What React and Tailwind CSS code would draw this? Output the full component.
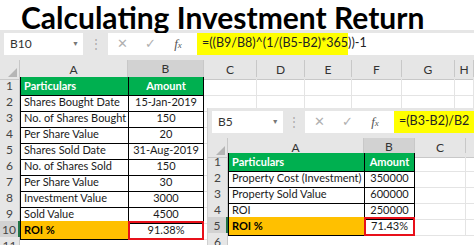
import React from "react";

const F = { fontFamily: "Lato, 'Open Sans', sans-serif" };

function FormulaBar({ name, formula, nameW, inputW, yellowW }) {
  return (
    <div className="flex items-center h-[27px] bg-[#e6e6e6]" style={F}>
      <div className="ml-[4px] h-[22px] bg-white flex items-center justify-between pl-[6px] pr-[4px] text-[12px] text-[#333]" style={{ width: nameW }}>
        <span>{name}</span>
        <span className="text-[7px] text-[#777]">▼</span>
      </div>
      <div className="w-[25px] flex justify-center text-[#aaa] text-[12px]">⋮</div>
      <div className="h-[22px] bg-white flex items-center flex-1">
        <div className="flex items-center h-full" style={{ width: inputW }}>
          <span className="w-[28px] text-center text-[#b0b0b0] text-[13px] leading-none">✕</span>
          <span className="w-[28px] text-center text-[#b0b0b0] text-[13px] leading-none">✓</span>
          <span className="w-[28px] text-center text-[#555] text-[13px] italic leading-none" style={{ fontFamily: "'Liberation Serif', serif" }}>f<span className="text-[9px]">x</span></span>
        </div>
        <div className="h-full bg-[#ffff00] flex items-center pl-[5px] text-[12.5px] text-[#222] whitespace-nowrap" style={{ width: yellowW }}>
          {formula}
        </div>
      </div>
    </div>
  );
}

function Corner() {
  return (
    <div className="relative h-full bg-[#e6e6e6] border-r border-b border-[#c8c8c8]">
      <div className="absolute right-[2px] bottom-[2px] w-0 h-0 border-l-[9px] border-l-transparent border-b-[9px] border-b-[#b5b5b5]" />
    </div>
  );
}

function ColHeaders({ cols, selected }) {
  return cols.map((c, i) => (
    <div
      key={i}
      className={
        "flex items-center justify-center text-[12px] text-[#333] border-r border-[#c8c8c8] " +
        (c === selected ? "bg-[#d2d2d2] border-b-2 border-b-[#217346]" : "bg-[#e6e6e6] border-b border-b-[#c8c8c8]")
      }
    >
      {c}
    </div>
  ));
}

function Sheet({ colWidths, cols, selectedCol, rows, selectedRow, extraRows, rowH, headH }) {
  const template = colWidths.map((w) => w + "px").join(" ");
  return (
    <div className="bg-white" style={F}>
      <div className="grid" style={{ gridTemplateColumns: template, height: headH }}>
        <Corner />
        <ColHeaders cols={cols} selected={selectedCol} />
      </div>
      {rows.map((r, i) => {
        const n = i + 1;
        const sel = n === selectedRow;
        return (
          <div key={n} className="grid" style={{ gridTemplateColumns: template, height: rowH }}>
            <div className={"flex items-center justify-center text-[12px] text-[#444] border-b border-[#d4d4d4] " + (sel ? "bg-[#d2d2d2] border-r-2 border-r-[#217346]" : "bg-[#e6e6e6] border-r border-r-[#c8c8c8]")}>
              {n}
            </div>
            <div className={"flex items-center pl-[3px] text-[11px] whitespace-nowrap overflow-hidden border-l border-b border-black " + r.cls}>
              {r.a}
            </div>
            <div className={"flex items-center justify-center text-[11px] whitespace-nowrap border-l border-r border-b border-black " + r.bcls}>
              {r.b}
            </div>
            {Array.from({ length: colWidths.length - 3 }).map((_, k) => (
              <div key={k} className="border-r border-b border-[#e4e4e4]" />
            ))}
          </div>
        );
      })}
      {Array.from({ length: extraRows }).map((_, i) => (
        <div key={"x" + i} className="grid" style={{ gridTemplateColumns: template, height: rowH }}>
          <div className="flex items-center justify-center text-[12px] text-[#444] bg-[#e6e6e6] border-r border-[#c8c8c8]">
            {rows.length + 1 + i}
          </div>
        </div>
      ))}
    </div>
  );
}

const plain = { cls: "text-[#1a1a1a]", bcls: "text-[#1a1a1a]" };
const head = { cls: "bg-[#00b050] text-white font-bold", bcls: "bg-[#00b050] text-white font-bold" };
const roi = { cls: "bg-[#ffc000] text-black font-bold", bcls: "text-[#1a1a1a] outline outline-2 outline-[#e8101a] -outline-offset-2" };

const rows1 = [
  { a: "Particulars", b: "Amount", ...head },
  { a: "Shares Bought Date", b: "15-Jan-2019", ...plain },
  { a: "No. of Shares Bought", b: "150", ...plain },
  { a: "Per Share Value", b: "20", ...plain },
  { a: "Shares Sold Date", b: "31-Aug-2019", ...plain },
  { a: "No. of Shares Sold", b: "150", ...plain },
  { a: "Per Share Value", b: "30", ...plain },
  { a: "Investment Value", b: "3000", ...plain },
  { a: "Sold Value", b: "4500", ...plain },
  { a: "ROI %", b: "91.38%", ...roi },
];

const rows2 = [
  { a: "Particulars", b: "Amount", ...head },
  { a: "Property Cost (Investment)", b: "350000", ...plain },
  { a: "Property Sold Value", b: "600000", ...plain },
  { a: "ROI", b: "250000", ...plain },
  { a: "ROI %", b: "71.43%", ...roi },
];

export default function App() {
  return (
    <div className="relative w-[474px] h-[245px] overflow-hidden bg-white">
      <div className="h-[30px] pl-[21px] pt-[3px] flex items-center text-[30px] font-bold text-black leading-none" style={F}>
        Calculating Investment Return
      </div>
      <FormulaBar name="B10" formula="=((B9/B8)^(1/(B5-B2)*365))-1" nameW={79} inputW={89} yellowW={151} />
      <div className="h-[3px] bg-[#e6e6e6]" />
      <Sheet
        colWidths={[20, 108, 76, 53, 48, 47, 50, 53, 19]}
        cols={["A", "B", "C", "D", "E", "F", "G", "H"]}
        selectedCol="B"
        rows={rows1}
        selectedRow={10}
        extraRows={1}
        rowH={16}
        headH={17}
      />
      <div className="absolute left-[207px] top-[108px] w-[267px] h-[137px] bg-white border-l border-[#d0d0d0]">
        <FormulaBar name="B5" formula="=(B3-B2)/B2" nameW={78} inputW={89} yellowW={80} />
        <div className="h-[3px] bg-[#e6e6e6]" />
        <Sheet
          colWidths={[20, 136, 51, 51, 9]}
          cols={["A", "B", "C", ""]}
          selectedCol="B"
          rows={rows2}
          selectedRow={5}
          extraRows={1}
          rowH={16}
          headH={15}
        />
      </div>
    </div>
  );
}
